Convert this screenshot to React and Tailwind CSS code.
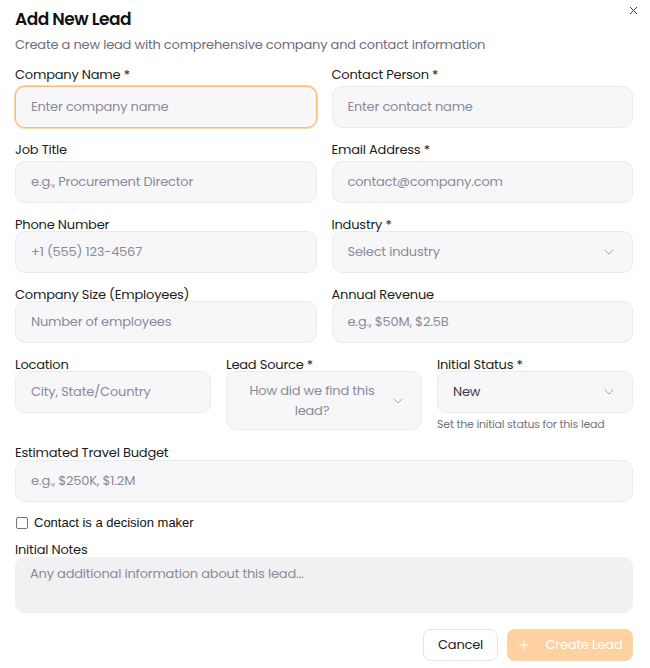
import React from "react";
import { X, ChevronDown, Plus } from "lucide-react";

const font = { fontFamily: "Poppins, Inter, 'Noto Sans', sans-serif" };

function Label({ children, className = "" }) {
  return <div className={`text-[13px] leading-4 text-[#1c1c22] ${className}`}>{children}</div>;
}

function Field({ label, placeholder, gap = "mt-1", focused = false }) {
  return (
    <div>
      <Label>{label}</Label>
      <div
        className={`${gap} h-[42px] rounded-[10px] border bg-[#f7f7f9] px-[15px] flex items-center text-[13px] text-[#8b8a98] ${
          focused ? "border-[#fdba74] ring-1 ring-[#fed7aa]" : "border-[#ebebef]"
        }`}
      >
        {placeholder}
      </div>
    </div>
  );
}

function SelectField({ label, value, gap = "mt-1", dark = false }) {
  return (
    <div>
      <Label>{label}</Label>
      <div className={`${gap} h-[42px] rounded-[10px] border border-[#ebebef] bg-[#f7f7f9] pl-[15px] pr-[15px] flex items-center justify-between text-[13px] ${dark ? "text-[#3b3a45]" : "text-[#8b8a98]"}`}>
        <span>{value}</span>
        <ChevronDown size={16} className="text-[#9a99a6]" strokeWidth={1.25} />
      </div>
    </div>
  );
}

export default function App() {
  return (
    <div className="w-[650px] h-[668px] bg-white relative tracking-[-0.2px]" style={font}>
      <button className="absolute right-[10px] top-[4px] text-[#333]">
        <X size={13} strokeWidth={1.75} />
      </button>

      <div className="pl-[15px] pr-[17px] pt-[7px]">
        {/* Header */}
        <h2 className="text-[17px] leading-6 font-semibold text-[#111118] tracking-[-0.5px]">Add New Lead</h2>
        <p className="mt-1 text-[13px] leading-5 text-[#6e6d7a]">
          Create a new lead with comprehensive company and contact information
        </p>

        {/* Row 1 */}
        <div className="mt-[12px] grid grid-cols-2 gap-x-[15px]">
          <Field label="Company Name *" placeholder="Enter company name" gap="mt-[3px]" focused />
          <Field label="Contact Person *" placeholder="Enter contact name" gap="mt-[3px]" />
        </div>

        {/* Row 2 */}
        <div className="mt-[14px] grid grid-cols-2 gap-x-[15px]">
          <Field label="Job Title" placeholder="e.g., Procurement Director" gap="mt-[3px]" />
          <Field label="Email Address *" placeholder="contact@company.com" gap="mt-[3px]" />
        </div>

        {/* Row 3 */}
        <div className="mt-[14px] grid grid-cols-2 gap-x-[15px]">
          <Field label="Phone Number" placeholder="+1 (555) 123-4567" gap="-mt-[2px]" />
          <SelectField label="Industry *" value="Select industry" gap="-mt-[2px]" />
        </div>

        {/* Row 4 */}
        <div className="mt-[14px] grid grid-cols-2 gap-x-[15px]">
          <Field label="Company Size (Employees)" placeholder="Number of employees" gap="-mt-[2px]" />
          <Field label="Annual Revenue" placeholder="e.g., $50M, $2.5B" gap="-mt-[2px]" />
        </div>

        {/* Row 5 */}
        <div className="mt-[14px] grid grid-cols-3 gap-x-[15px] items-start">
          <Field label="Location" placeholder="City, State/Country" gap="-mt-[2px]" />
          <div>
            <Label>Lead Source *</Label>
            <div className="-mt-[2px] h-[59px] rounded-[10px] border border-[#ebebef] bg-[#f7f7f9] pl-[15px] pr-[15px] flex items-center gap-2 text-[13px] text-[#8b8a98]">
              <span className="flex-1 text-center leading-[20px]">How did we find this lead?</span>
              <ChevronDown size={16} className="text-[#9a99a6] shrink-0" strokeWidth={1.25} />
            </div>
          </div>
          <div>
            <SelectField label="Initial Status *" value="New" gap="-mt-[2px]" dark />
            <p className="mt-[3px] text-[11px] leading-4 text-[#74737f]">Set the initial status for this lead</p>
          </div>
        </div>

        {/* Budget */}
        <div className="mt-[13px]">
          <Field label="Estimated Travel Budget" placeholder="e.g., $250K, $1.2M" gap="-mt-px" />
        </div>

        {/* Checkbox */}
        <label className="mt-[13px] flex items-center gap-[6px] text-[13px] leading-4 text-[#111] tracking-normal" style={{ fontFamily: "'Liberation Sans', Arial, sans-serif" }}>
          <span className="w-[12px] h-[12px] rounded-[2px] border border-[#767676] bg-white ml-px" />
          Contact is a decision maker
        </label>

        {/* Notes */}
        <div className="mt-[11px]">
          <Label>Initial Notes</Label>
          <div className="-mt-px h-[56px] rounded-[10px] bg-[#f1f1f3] px-[15px] pt-[7px] text-[13px] leading-5 text-[#8b8a98]">
            Any additional information about this lead...
          </div>
        </div>

        {/* Footer */}
        <div className="mt-4 flex justify-end gap-[9px]">
          <button className="h-[32px] w-[75px] rounded-[8px] border border-[#e4e4e8] bg-white text-[13px] text-[#1c1c22]">
            Cancel
          </button>
          <button className="h-[32px] w-[126px] rounded-[8px] bg-[#fed2a0] text-[13px] text-white flex items-center justify-center gap-[14px]">
            <Plus size={14} strokeWidth={1.75} />
            Create Lead
          </button>
        </div>
      </div>
    </div>
  );
}
